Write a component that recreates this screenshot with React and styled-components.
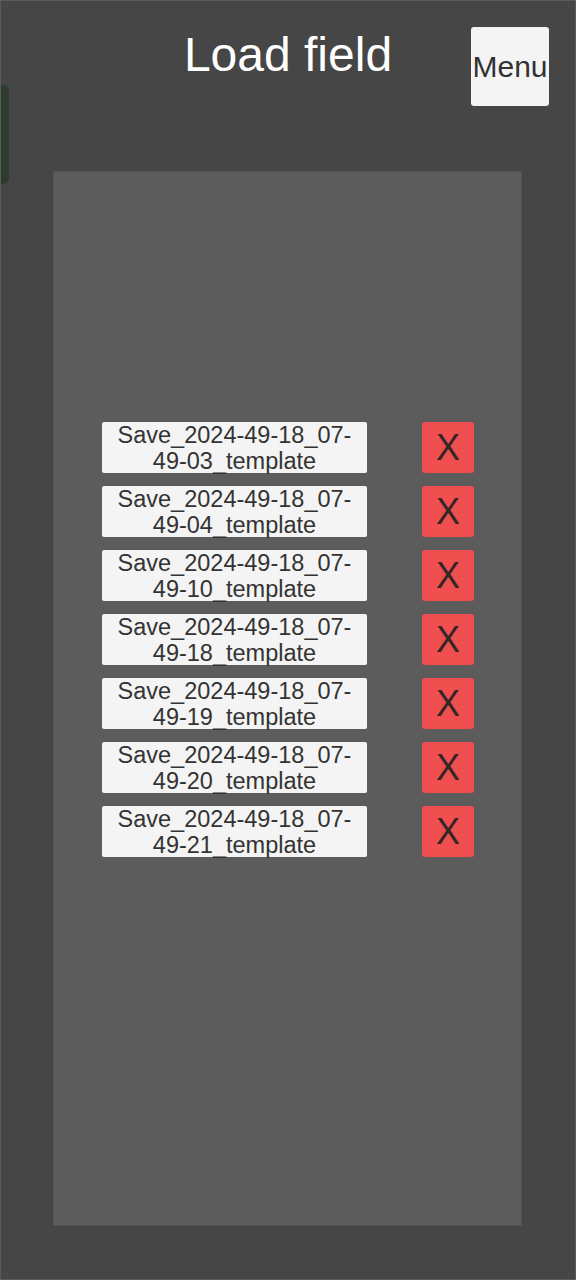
import React from 'react';
import styled, { createGlobalStyle } from 'styled-components';

const GlobalStyle = createGlobalStyle`
  html, body {
    margin: 0;
    padding: 0;
    background: #464646;
  }
  * {
    box-sizing: border-box;
  }
`;

const Screen = styled.div`
  position: relative;
  width: 576px;
  height: 1280px;
  display: flex;
  flex-direction: column;
  background: #464646;
  border: 1px solid #5a5a5a;
  font-family: "Liberation Sans", Arial, sans-serif;
  overflow: hidden;
`;

/* little green drawer handle peeking in from the left edge */
const SideHandle = styled.div`
  position: absolute;
  left: -1px;
  top: 83px;
  width: 10px;
  height: 101px;
  background: #2f3b30;
  border: 1px solid #3b4a3c;
  border-left: none;
  border-radius: 0 7px 7px 0;
`;

const Header = styled.header`
  display: grid;
  grid-template-columns: 1fr auto 1fr;
  align-items: start;
  height: 171px;
  padding: 26px 26px 0;
`;

const Title = styled.h1`
  grid-column: 2;
  margin: 4px 0 0;
  font-size: 48px;
  line-height: 48px;
  font-weight: normal;
  color: #ffffff;
  white-space: nowrap;
`;

const MenuButton = styled.button`
  grid-column: 3;
  justify-self: end;
  width: 78px;
  height: 79px;
  padding: 0;
  display: flex;
  align-items: center;
  justify-content: center;
  background: #f4f4f4;
  border: none;
  border-radius: 3px;
  font-family: inherit;
  font-size: 30px;
  color: #323232;
`;

const Panel = styled.main`
  flex: 1;
  margin: 0 54px 54px 53px;
  padding: 250px 47px 0 48px;
  background: #5c5c5c;
  box-shadow: 0 0 0 1px #525252;
`;

const SaveList = styled.ul`
  list-style: none;
  margin: 0;
  padding: 0;
  display: flex;
  flex-direction: column;
  gap: 13px;
`;

const SaveRow = styled.li`
  display: flex;
  justify-content: space-between;
  height: 51px;
`;

const SaveButton = styled.button`
  width: 265px;
  height: 51px;
  padding: 1px 0 0;
  display: flex;
  align-items: center;
  justify-content: center;
  background: #f4f4f4;
  border: none;
  border-radius: 2px;
  font-family: inherit;
  font-size: 23.5px;
  line-height: 26px;
  color: #333333;
  text-align: center;
  overflow: visible;
`;

const DeleteButton = styled.button`
  width: 52px;
  height: 51px;
  padding: 0;
  display: flex;
  align-items: center;
  justify-content: center;
  background: #f04f4f;
  border: none;
  border-radius: 3px;
  font-family: inherit;
  font-size: 36px;
  line-height: 1;
  color: #322626;
`;

const saves = ['03', '04', '10', '18', '19', '20', '21'].map(
  s => `Save_2024-49-18_07-49-${s}_template`
);

const App = () => {
  return (
    <>
      <GlobalStyle />
      <Screen>
        <SideHandle />
        <Header>
          <Title>Load field</Title>
          <MenuButton>Menu</MenuButton>
        </Header>
        <Panel>
          <SaveList>
            {saves.map(name => (
              <SaveRow key={name}>
                <SaveButton>
                  <span>
                    {name.slice(0, 19)}
                    <br />
                    {name.slice(19)}
                  </span>
                </SaveButton>
                <DeleteButton>X</DeleteButton>
              </SaveRow>
            ))}
          </SaveList>
        </Panel>
      </Screen>
    </>
  );
};

export default App;
